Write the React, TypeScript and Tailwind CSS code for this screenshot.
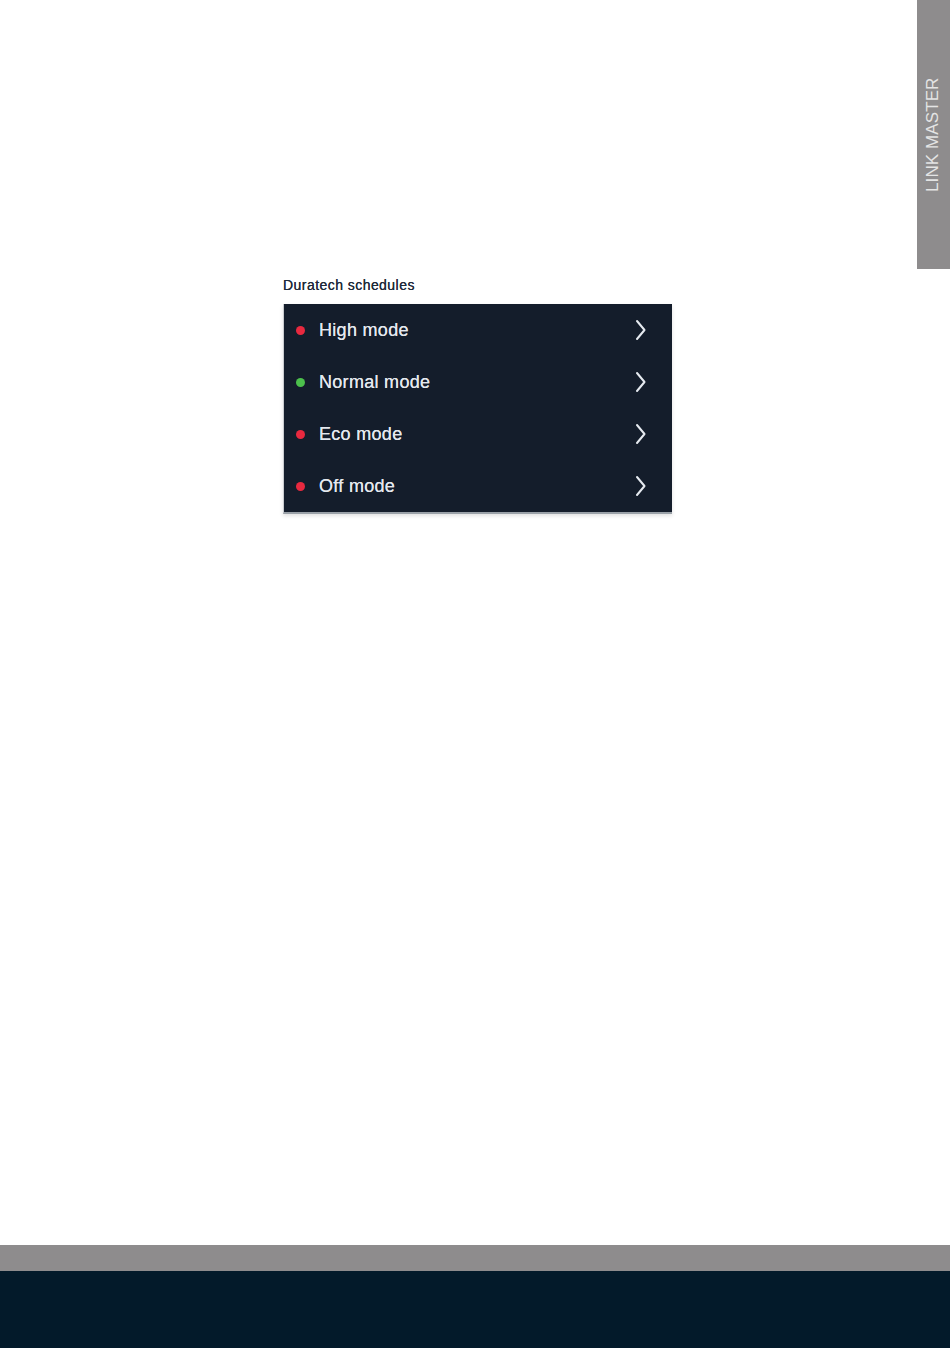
const modes = [
  { name: 'High mode', active: false },
  { name: 'Normal mode', active: true },
  { name: 'Eco mode', active: false },
  { name: 'Off mode', active: false },
];

function Chevron() {
  return (
    <svg width="12" height="22" viewBox="0 0 12 22" fill="none" className="text-[#e6eaf0]">
      <path d="M2 2 L9.5 11 L2 20" stroke="currentColor" strokeWidth="2" strokeLinecap="round" strokeLinejoin="round" />
    </svg>
  );
}

export default function App() {
  return (
    <div className="w-[950px] h-[1348px] bg-white flex flex-col font-['Liberation_Sans',Arial,sans-serif] overflow-hidden">
      <div className="flex-1 flex">
        <div className="flex-1 flex flex-col pl-[283px] pt-[277px]">
          <div className="text-[14px] leading-[17px] text-[#1f2a3a] tracking-[0.45px] [text-shadow:0_0_0.4px_#1f2a3a]">
            Duratech schedules
          </div>
          <div className="mt-[10px] w-[389px] bg-[#141d2b] border-l border-[#c9ccd0] border-b-2 border-b-[#9aa1a8] shadow-[0_2px_4px_rgba(0,0,0,0.12)]">
            {modes.map((m) => (
              <div key={m.name} className="h-[52px] flex items-center pl-[12px] pr-[25px]">
                <span
                  className={`w-[9px] h-[9px] rounded-full ${m.active ? 'bg-[#4cc04c]' : 'bg-[#e8293f]'}`}
                />
                <span className="ml-[14px] flex-1 text-[18px] leading-[22px] text-[#e4e8ee] tracking-[0.3px] [text-shadow:0_0_0.5px_#e4e8ee]">
                  {m.name}
                </span>
                <Chevron />
              </div>
            ))}
          </div>
        </div>
        <div className="w-[33px] h-[269px] bg-[#8e8c8d] flex items-center justify-center">
          <span className="block -rotate-90 whitespace-nowrap text-[17px] text-[#e4e4e4] font-light tracking-[0.1px]">
            LINK MASTER
          </span>
        </div>
      </div>
      <div className="h-[26px] bg-[#8e8c8d]" />
      <div className="h-[77px] bg-[#031a2a]" />
    </div>
  );
}
